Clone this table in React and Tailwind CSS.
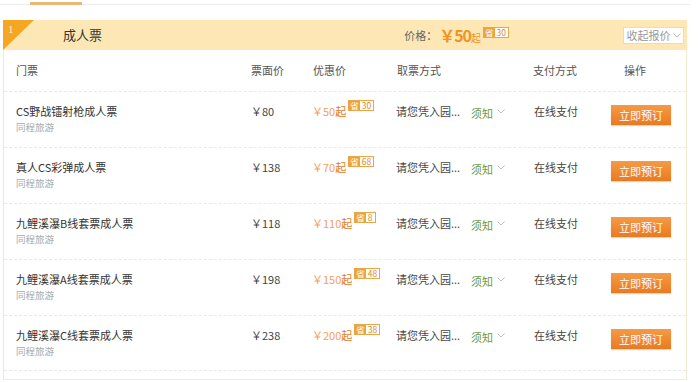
import React from "react";

const rows = [
  { name: "CS野战镭射枪成人票", face: "80", price: "50", save: "30" },
  { name: "真人CS彩弹成人票", face: "138", price: "70", save: "68" },
  { name: "九鲤溪瀑B线套票成人票", face: "118", price: "110", save: "8" },
  { name: "九鲤溪瀑A线套票成人票", face: "198", price: "150", save: "48" },
  { name: "九鲤溪瀑C线套票成人票", face: "238", price: "200", save: "38" },
];

function Chevron({ className }) {
  return (
    <svg width="8" height="5" viewBox="0 0 8 5" className={className}>
      <path d="M0.5 0.5 L4 4 L7.5 0.5" fill="none" stroke="currentColor" strokeWidth="1" />
    </svg>
  );
}

function SaveBadge({ n, className = "" }) {
  return (
    <div className={"flex items-stretch h-[11px] text-[8.5px] leading-[9px] border border-[#e8a64a] " + className}>
      <div className="bg-[#eea43c] text-white px-[1px]">省</div>
      <div className="bg-white text-[#d88a2a] px-[2px]">{n}</div>
    </div>
  );
}

export default function App() {
  return (
    <div
      className="w-[700px] h-[382px] bg-white overflow-hidden relative"
      style={{ fontFamily: '"Noto Sans CJK SC", "Noto Sans", sans-serif' }}
    >
      {/* top tab line */}
      <div className="h-[20px] pt-[3px]">
        <div className="relative h-[2px] border-b border-[#ececec] mr-[10px]">
          <div className="absolute left-[30px] top-[-1px] w-[52px] h-[3px] bg-[#e9b978]" />
        </div>
      </div>

      <div className="ml-[3px] w-[684px]">
        {/* band */}
        <div className="relative h-[30px] bg-[#fde8b5] flex items-center">
          <svg className="absolute left-0 top-0" width="31" height="30" viewBox="0 0 31 30">
            <polygon points="0,0 31,0 0,30" fill="#f5a623" />
          </svg>
          <span className="absolute left-[5px] top-[3px] text-[11px] leading-[12px] text-[#fff3dc]" style={{ fontFamily: '"Liberation Serif", serif' }}>1</span>
          <span className="ml-[60px] text-[13px] text-[#333]">成人票</span>
          <div className="ml-auto flex items-center">
            <span className="text-[11px] text-[#666]">价格：</span>
            <span className="text-[#f29422] font-bold text-[16px] leading-[20px] ml-[2px] tracking-[-1px]">￥50</span>
            <span className="text-[#f29422] text-[10px] mt-[5px]">起</span>
            <SaveBadge n="30" className="mb-[6px] ml-[2px]" />
            <div className="ml-[114px] mr-[3px] h-[17px] w-[61px] bg-white border border-[#e4dccb] flex items-center justify-center gap-[2px] text-[11px] text-[#999]">
              收起报价
              <Chevron className="text-[#bbb]" />
            </div>
          </div>
        </div>

        {/* body */}
        <div className="border-x border-b border-[#f3e9cd] pb-[8px]">
          <div className="h-[41px] flex items-center text-[11px] text-[#555]">
            <div className="w-[247px] pl-[12px]">门票</div>
            <div className="w-[62px]">票面价</div>
            <div className="w-[84px]">优惠价</div>
            <div className="w-[136px]">取票方式</div>
            <div className="w-[91px]">支付方式</div>
            <div>操作</div>
          </div>
          {rows.map((r, i) => (
            <div
              key={i}
              className={
                "h-[56px] border-t border-dashed border-[#e8e8e8] flex items-start" +
                (i === rows.length - 1 ? " border-b" : "")
              }
            >
              <div className="w-[247px] pl-[12px] pt-[11px]">
                <div className="text-[11px] leading-[16px] text-[#333]">{r.name}</div>
                <div className="text-[9.5px] leading-[14px] text-[#aaa] mt-[1px]">同程旅游</div>
              </div>
              <div className="w-[61px] pt-[11px] text-[11px] leading-[16px] text-[#444]">￥{r.face}</div>
              <div className="w-[84px] pt-[11px] flex items-start">
                <span className="text-[11px] leading-[16px] text-[#f2a15a]">￥{r.price}</span>
                <span className="text-[11px] leading-[16px] text-[#e07b1a]">起</span>
                <SaveBadge n={r.save} className="ml-[2px] mt-[-3px]" />
              </div>
              <div className="w-[75px] pt-[11px] text-[11px] leading-[16px] text-[#444]">请您凭入园...</div>
              <div className="w-[63px] pt-[11px] flex items-start gap-[4px]">
                <span className="text-[11px] leading-[16px] text-[#6f9a3c] mt-[2px]">须知</span>
                <Chevron className="text-[#bbb] mt-[6px]" />
              </div>
              <div className="w-[77px] pt-[11px] text-[11px] leading-[16px] text-[#444]">在线支付</div>
              <div className="pt-[9px]">
                <button className="w-[60px] h-[20px] bg-gradient-to-b from-[#f59a45] to-[#ea7a1e] text-white text-[11px] leading-[20px] shadow-[0_1px_1px_rgba(0,0,0,0.15)]">
                  立即预订
                </button>
              </div>
            </div>
          ))}
        </div>
      </div>
    </div>
  );
}
